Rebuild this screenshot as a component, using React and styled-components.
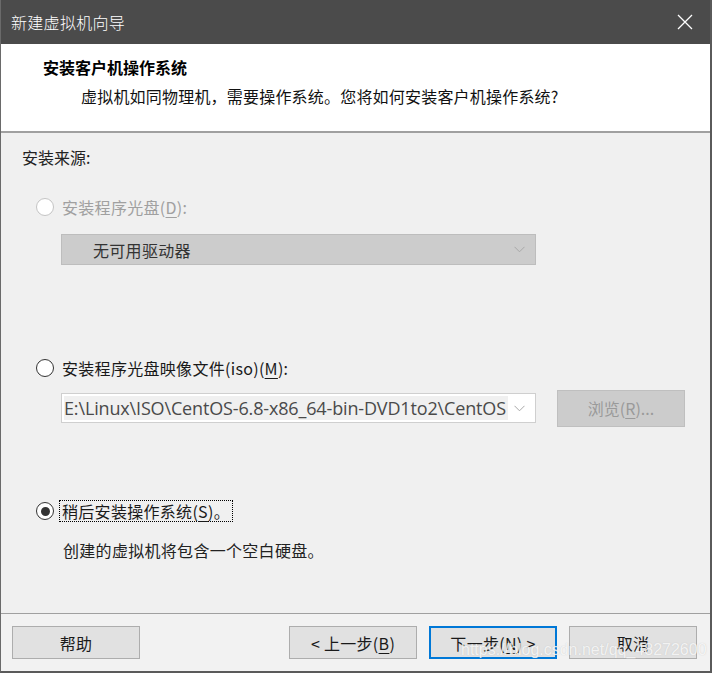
import React from "react";
import styled, { createGlobalStyle } from "styled-components";

const GlobalStyle = createGlobalStyle`
	html, body {
		margin: 0;
		padding: 0;
		background: #f0f0f0;
	}
	body {
		font-family: "Noto Sans CJK SC", "Noto Sans", sans-serif;
	}
`;

const ChevronDown = () => (
	<svg width="11" height="7" viewBox="0 0 11 7">
		<path d="M0.5 0.8 L5.5 5.8 L10.5 0.8" fill="none" stroke="#a8a8a8" strokeWidth="1" />
	</svg>
);

const CloseIcon = () => (
	<svg width="16" height="16" viewBox="0 0 16 16">
		<path d="M1 1 L15 15 M15 1 L1 15" stroke="#ffffff" strokeWidth="1.3" />
	</svg>
);

const Radio = ({ checked, disabled }) => (
	<RadioCircle disabled={disabled}>{checked && <RadioDot />}</RadioCircle>
);

const App = () => {
	return (
		<>
			<GlobalStyle />
			<Window>
				<TitleBar>
					<Title>新建虚拟机向导</Title>
					<CloseButton>
						<CloseIcon />
					</CloseButton>
				</TitleBar>
				<Header>
					<HeaderTitle>安装客户机操作系统</HeaderTitle>
					<HeaderSub>虚拟机如同物理机，需要操作系统。您将如何安装客户机操作系统?</HeaderSub>
				</Header>
				<Body>
					<SourceLabel>安装来源:</SourceLabel>

					<OptionRow gap={29}>
						<Radio disabled />
						<OptionLabel disabled>
							安装程序光盘(<u>D</u>):
						</OptionLabel>
					</OptionRow>
					<Select disabled>
						<SelectText>无可用驱动器</SelectText>
						<ChevronDown />
					</Select>

					<OptionRow gap={92}>
						<Radio />
						<OptionLabel>
							安装程序光盘映像文件(iso)(<u>M</u>):
						</OptionLabel>
					</OptionRow>
					<ComboRow>
						<Combo>
							<ComboText>E:\Linux\ISO\CentOS-6.8-x86_64-bin-DVD1to2\CentOS</ComboText>
							<ChevronDown />
						</Combo>
						<BrowseButton>
							浏览(<u>R</u>)...
						</BrowseButton>
					</ComboRow>

					<OptionRow gap={74}>
						<Radio checked />
						<OptionLabel focused>
							稍后安装操作系统(<u>S</u>)。
						</OptionLabel>
					</OptionRow>
					<Description>创建的虚拟机将包含一个空白硬盘。</Description>
				</Body>
				<Footer>
					<Button>帮助</Button>
					<Spacer />
					<Button>
						&lt; 上一步(<u>B</u>)
					</Button>
					<Button primary>
						下一步(<u>N</u>) &gt;
					</Button>
					<Button>取消</Button>
					<Watermark>https://blog.csdn.net/qq_48272600</Watermark>
				</Footer>
			</Window>
		</>
	);
};

const Window = styled.div`
	position: relative;
	width: 712px;
	height: 673px;
	box-sizing: border-box;
	display: flex;
	flex-direction: column;
	background: #f0f0f0;
	border-left: 1px solid #6a6a6a;
	border-right: 2px solid #5a5a5a;
	border-bottom: 2px solid #5a5a5a;
	overflow: hidden;
`;

const TitleBar = styled.div`
	height: 44px;
	margin: 0 -2px 0 -1px;
	flex-shrink: 0;
	background: #4b4b4b;
	display: flex;
	align-items: center;
	justify-content: space-between;
	padding-left: 11px;
`;

const Title = styled.div`
	color: #ffffff;
	font-size: 16px;
	font-family: "Noto Sans CJK SC", sans-serif;
	font-weight: 300;
	letter-spacing: 0.3px;
`;

const CloseButton = styled.div`
	width: 46px;
	height: 44px;
	display: flex;
	align-items: center;
	justify-content: center;
	margin-right: 4px;
`;

const Header = styled.div`
	flex-shrink: 0;
	background: #ffffff;
	border-bottom: 2px solid #a0a0a0;
	padding: 10px 0 0 42px;
	height: 77px;
`;

const HeaderTitle = styled.div`
	font-size: 16px;
	font-weight: 700;
	line-height: 26px;
	color: #000;
	font-family: "Noto Sans CJK SC", serif;
`;

const HeaderSub = styled.div`
	font-size: 16px;
	line-height: 24px;
	color: #111;
	margin-top: 4px;
	padding-left: 38px;
	letter-spacing: 0.2px;
`;

const Body = styled.div`
	flex: 1;
	padding: 14px 0 0 21px;
	display: flex;
	flex-direction: column;
	align-items: flex-start;
`;

const SourceLabel = styled.div`
	font-size: 16px;
	line-height: 20px;
	color: #222;
`;

const OptionRow = styled.div`
	display: flex;
	align-items: center;
	height: 22px;
	padding-left: 14px;
	margin-top: ${(p) => p.gap}px;
`;

const RadioCircle = styled.div`
	width: 18px;
	height: 18px;
	box-sizing: border-box;
	border-radius: 50%;
	background: #ffffff;
	border: 1px solid ${(p) => (p.disabled ? "#c4c4c4" : "#333333")};
	display: flex;
	align-items: center;
	justify-content: center;
	flex-shrink: 0;
`;

const RadioDot = styled.div`
	width: 9px;
	height: 9px;
	border-radius: 50%;
	background: #333333;
`;

const OptionLabel = styled.div`
	margin-left: 5px;
	font-size: 16px;
	line-height: 20px;
	padding: 0 2px;
	color: ${(p) => (p.disabled ? "#a0a0a0" : "#1a1a1a")};
	border: 1px ${(p) => (p.focused ? "dotted #000" : "solid transparent")};
	letter-spacing: 0.3px;
	font-family: "Noto Sans CJK SC", "Noto Sans", sans-serif;

	u {
		text-underline-offset: 3px;
	}
`;

const Select = styled.div`
	margin: 16px 0 0 39px;
	width: 475px;
	height: 31px;
	box-sizing: border-box;
	background: #cccccc;
	border: 1px solid #bdbdbd;
	display: flex;
	align-items: center;
	justify-content: space-between;
	padding: 0 10px 0 31px;
`;

const SelectText = styled.div`
	font-size: 16px;
	color: #333;
	letter-spacing: 0.3px;
`;

const ComboRow = styled.div`
	display: flex;
	align-items: center;
	margin: 11px 0 0 39px;
	gap: 21px;
	height: 36px;
`;

const Combo = styled.div`
	width: 475px;
	height: 30px;
	box-sizing: border-box;
	background: #ffffff;
	border: 1px solid #cfcfcf;
	display: flex;
	align-items: center;
	justify-content: space-between;
	padding: 2px 10px 2px 2px;
`;

const ComboText = styled.div`
	height: 100%;
	width: 444px;
	background: #f0f0f0;
	font-family: "Open Sans", "Noto Sans", sans-serif;
	font-size: 18px;
	line-height: 24px;
	color: #4a4a4a;
	white-space: nowrap;
	overflow: hidden;
	letter-spacing: -0.15px;
`;

const BrowseButton = styled.div`
	width: 128px;
	height: 37px;
	box-sizing: border-box;
	background: #cccccc;
	border: 1px solid #bfbfbf;
	display: flex;
	align-items: center;
	justify-content: center;
	font-size: 16px;
	color: #9a9a9a;

	u {
		text-underline-offset: 3px;
	}
`;

const Description = styled.div`
	margin: 18px 0 0 41px;
	font-size: 16px;
	line-height: 20px;
	color: #222;
	letter-spacing: 0.3px;
`;

const Footer = styled.div`
	position: relative;
	height: 58px;
	flex-shrink: 0;
	border-top: 1px solid #a0a0a0;
	background: #f2f2f2;
	display: flex;
	align-items: flex-start;
	padding: 12px 13px 0 11px;
	gap: 12px;
	box-sizing: border-box;
`;

const Spacer = styled.div`
	flex: 1;
`;

const Button = styled.div`
	width: 128px;
	height: 33px;
	box-sizing: border-box;
	background: #e1e1e1;
	border: ${(p) => (p.primary ? "2px solid #0078d7" : "1px solid #adadad")};
	display: flex;
	align-items: center;
	justify-content: center;
	font-size: 16px;
	color: #1a1a1a;
	letter-spacing: 0.3px;

	u {
		text-underline-offset: 3px;
	}
`;

const Watermark = styled.div`
	position: absolute;
	left: 460px;
	top: 27px;
	font-family: "Liberation Sans", Arial, sans-serif;
	font-size: 16px;
	color: rgba(255, 255, 255, 0.8);
	text-shadow: 0 0 1px rgba(160, 160, 160, 0.5);
	white-space: nowrap;
	pointer-events: none;
`;

export default App;
